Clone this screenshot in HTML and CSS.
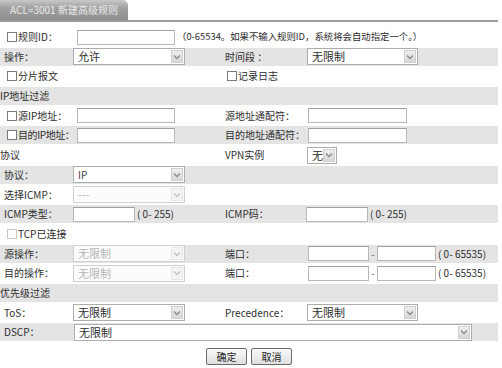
FILE: index.html
```html
<!DOCTYPE html>
<html>
<head>
    <meta charset="UTF-8">
    <title>ACL=3001 新建高级规则</title>
    <link rel="stylesheet" href="styles.css">
</head>
<body>
    <div class="page">
        <div class="tabbar">
            <div class="tab">ACL=3001 新建高级规则</div>
        </div>
        <div class="form">
            <div class="row">
                <div class="c1 ck"><span class="chk"></span>规则ID：</div>
                <div class="rest"><input class="txt w98 ml4" type="text"><span class="tip">（0-65534。如果不输入规则ID，系统将会自动指定一个。）</span></div>
            </div>
            <div class="row g">
                <div class="c1">操作：</div>
                <div class="c2"><div class="sel w112"><span>允许</span><i class="arr"><svg width="8" height="6" viewBox="0 0 8 6"><path d="M1 1.5 L4 4.5 L7 1.5"/></svg></i></div></div>
                <div class="c3">时间段 ：</div>
                <div class="c4"><div class="sel w111"><span>无限制</span><i class="arr"><svg width="8" height="6" viewBox="0 0 8 6"><path d="M1 1.5 L4 4.5 L7 1.5"/></svg></i></div></div>
            </div>
            <div class="row">
                <div class="c1 ck"><span class="chk"></span>分片报文</div>
                <div class="c2"></div>
                <div class="c3 ck3"><span class="chk"></span>记录日志</div>
            </div>
            <div class="row g">
                <div class="head">IP地址过滤</div>
            </div>
            <div class="row">
                <div class="c1 ck"><span class="chk"></span>源IP地址：</div>
                <div class="c2"><input class="txt w98 ml4" type="text"></div>
                <div class="c3">源地址通配符：</div>
                <div class="c4"><input class="txt w99 ml1" type="text"></div>
            </div>
            <div class="row g">
                <div class="c1 ck"><span class="chk"></span><span class="tight">目的IP地址：</span></div>
                <div class="c2"><input class="txt w98 ml4" type="text"></div>
                <div class="c3">目的地址通配符：</div>
                <div class="c4"><input class="txt w99 ml1" type="text"></div>
            </div>
            <div class="row">
                <div class="c1 head">协议</div>
                <div class="c2"></div>
                <div class="c3">VPN实例</div>
                <div class="c4"><div class="sel w30"><span>无</span><i class="arr"><svg width="8" height="6" viewBox="0 0 8 6"><path d="M1 1.5 L4 4.5 L7 1.5"/></svg></i></div></div>
            </div>
            <div class="row g">
                <div class="c1">协议：</div>
                <div class="c2"><div class="sel w112"><span class="lat">IP</span><i class="arr"><svg width="8" height="6" viewBox="0 0 8 6"><path d="M1 1.5 L4 4.5 L7 1.5"/></svg></i></div></div>
            </div>
            <div class="row">
                <div class="c1">选择ICMP：</div>
                <div class="c2"><div class="sel w112 off"><span>---</span><i class="arr"><svg width="8" height="6" viewBox="0 0 8 6"><path d="M1 1.5 L4 4.5 L7 1.5"/></svg></i></div></div>
            </div>
            <div class="row g">
                <div class="c1">ICMP类型：</div>
                <div class="c2"><input class="txt w62" type="text"><span class="rng">( 0- 255)</span></div>
                <div class="c3">ICMP码：</div>
                <div class="c4"><input class="txt w62 mlm1" type="text"><span class="rng">( 0- 255)</span></div>
            </div>
            <div class="row">
                <div class="c1 ck"><span class="chk off"></span>TCP已连接</div>
            </div>
            <div class="row g">
                <div class="c1">源操作：</div>
                <div class="c2"><div class="sel w112 off"><span>无限制</span><i class="arr"><svg width="8" height="6" viewBox="0 0 8 6"><path d="M1 1.5 L4 4.5 L7 1.5"/></svg></i></div></div>
                <div class="c3">端口：</div>
                <div class="c4"><input class="txt w61 ml1" type="text"><span class="dash">-</span><input class="txt w59" type="text"><span class="rng">( 0- 65535)</span></div>
            </div>
            <div class="row">
                <div class="c1">目的操作：</div>
                <div class="c2"><div class="sel w112 off"><span>无限制</span><i class="arr"><svg width="8" height="6" viewBox="0 0 8 6"><path d="M1 1.5 L4 4.5 L7 1.5"/></svg></i></div></div>
                <div class="c3">端口：</div>
                <div class="c4"><input class="txt w61 ml1" type="text"><span class="dash">-</span><input class="txt w59" type="text"><span class="rng">( 0- 65535)</span></div>
            </div>
            <div class="row g">
                <div class="head">优先级过滤</div>
            </div>
            <div class="row">
                <div class="c1">ToS：</div>
                <div class="c2"><div class="sel w112"><span>无限制</span><i class="arr"><svg width="8" height="6" viewBox="0 0 8 6"><path d="M1 1.5 L4 4.5 L7 1.5"/></svg></i></div></div>
                <div class="c3">Precedence：</div>
                <div class="c4"><div class="sel w111"><span>无限制</span><i class="arr"><svg width="8" height="6" viewBox="0 0 8 6"><path d="M1 1.5 L4 4.5 L7 1.5"/></svg></i></div></div>
            </div>
            <div class="row g">
                <div class="c1">DSCP：</div>
                <div class="rest"><div class="sel w398 ml1"><span>无限制</span><i class="arr"><svg width="8" height="6" viewBox="0 0 8 6"><path d="M1 1.5 L4 4.5 L7 1.5"/></svg></i></div></div>
            </div>
        </div>
        <div class="btns">
            <button class="btn" type="button">确定</button>
            <button class="btn" type="button">取消</button>
        </div>
    </div>
</body>
</html>
```

FILE: styles.css
```css
* {
    margin: 0;
    padding: 0;
    box-sizing: border-box;
}
body {
    font-family: "Noto Sans CJK SC", "Noto Sans", sans-serif;
    font-size: 10px;
    line-height: 1;
    color: #2e2e2e;
    background: #fff;
}
.page {
    width: 498px;
}

/* tab */
.tabbar {
    height: 22px;
    border-bottom: 2px solid #9c9c9c;
}
.tab {
    width: 128px;
    height: 20px;
    line-height: 20px;
    border-radius: 0 5px 0 0;
    background: linear-gradient(#c8c8c8, #a0a0a0 40%, #8f8f8f);
    color: #eaeaea;
    text-align: center;
}

/* rows */
.form {
    display: flex;
    flex-direction: column;
    gap: 1.7px;
    margin-top: 6px;
}
.row {
    display: flex;
    align-items: center;
    height: 18px;
}
.g {
    background: #e4e4e4;
}
.c1,
.c2,
.c3,
.c4,
.rest {
    display: flex;
    align-items: center;
    height: 100%;
    white-space: nowrap;
    flex-shrink: 0;
}
.c1 {
    width: 73px;
    padding-left: 4px;
}
.c2 {
    width: 152px;
}
.c3 {
    width: 82px;
}
.c4,
.rest {
    flex: 1;
}
.ck {
    padding-left: 7px;
}
.ck3 {
    padding-left: 2px;
}
.head {
    padding-left: 0;
    white-space: nowrap;
}
.tight {
    letter-spacing: -0.4px;
}

/* checkbox */
.chk {
    flex-shrink: 0;
    width: 10px;
    height: 10px;
    margin-right: 1px;
    border: 1px solid #7a7a7a;
    background: #fff;
}
.chk.off {
    border-color: #c8c8c8;
}

/* text inputs */
.txt {
    flex-shrink: 0;
    height: 15px;
    border: 1px solid #b8b8b8;
    border-top-color: #a0a0a0;
    background: #fff;
}
.w98 { width: 98px; }
.w99 { width: 99px; }
.w62 { width: 62px; }
.w61 { width: 61px; }
.w59 { width: 59px; }
.ml4 { margin-left: 4px; }
.ml1 { margin-left: 1px; }
.mlm1 { margin-left: -1px; }
.tip {
    margin-left: 2px;
    font-size: 9.4px;
    white-space: nowrap;
}
.rng {
    margin-left: 2px;
    white-space: nowrap;
}
.dash {
    width: 8px;
    text-align: center;
    color: #666;
}

/* selects */
.sel {
    flex-shrink: 0;
    display: flex;
    align-items: center;
    justify-content: space-between;
    height: 17px;
    padding-left: 4px;
    border: 1px solid #adadad;
    background: #fff;
    font-size: 11px;
}
.sel .lat {
    font-size: 10px;
    color: #444;
}
.w112 { width: 112px; }
.w111 { width: 111px; }
.w30 { width: 30px; }
.w398 { width: 398px; }
.arr {
    display: flex;
    align-items: center;
    justify-content: center;
    width: 12px;
    height: 13px;
    margin-right: 1px;
    border: 1px solid #d0d0d0;
    background: linear-gradient(#efefef, #d6d6d6);
}
.arr path {
    fill: none;
    stroke: #8a8a8a;
    stroke-width: 1.3;
}
.sel.off {
    border-color: #d0d0d0;
    color: #b4b4b4;
    background: #fcfcfc;
}
.sel.off .arr {
    border-color: #e6e6e6;
    background: #f4f4f4;
}
.sel.off .arr path {
    stroke: #c4c4c4;
}

/* buttons */
.btns {
    display: flex;
    justify-content: center;
    gap: 4px;
    margin-top: 7px;
}
.btn {
    width: 41px;
    height: 17px;
    border: 1px solid #6a6a6a;
    border-radius: 2px;
    background: linear-gradient(#fafafa, #dedede);
    font-family: "Noto Sans CJK SC", sans-serif;
    font-size: 10px;
    color: #222;
}
```
